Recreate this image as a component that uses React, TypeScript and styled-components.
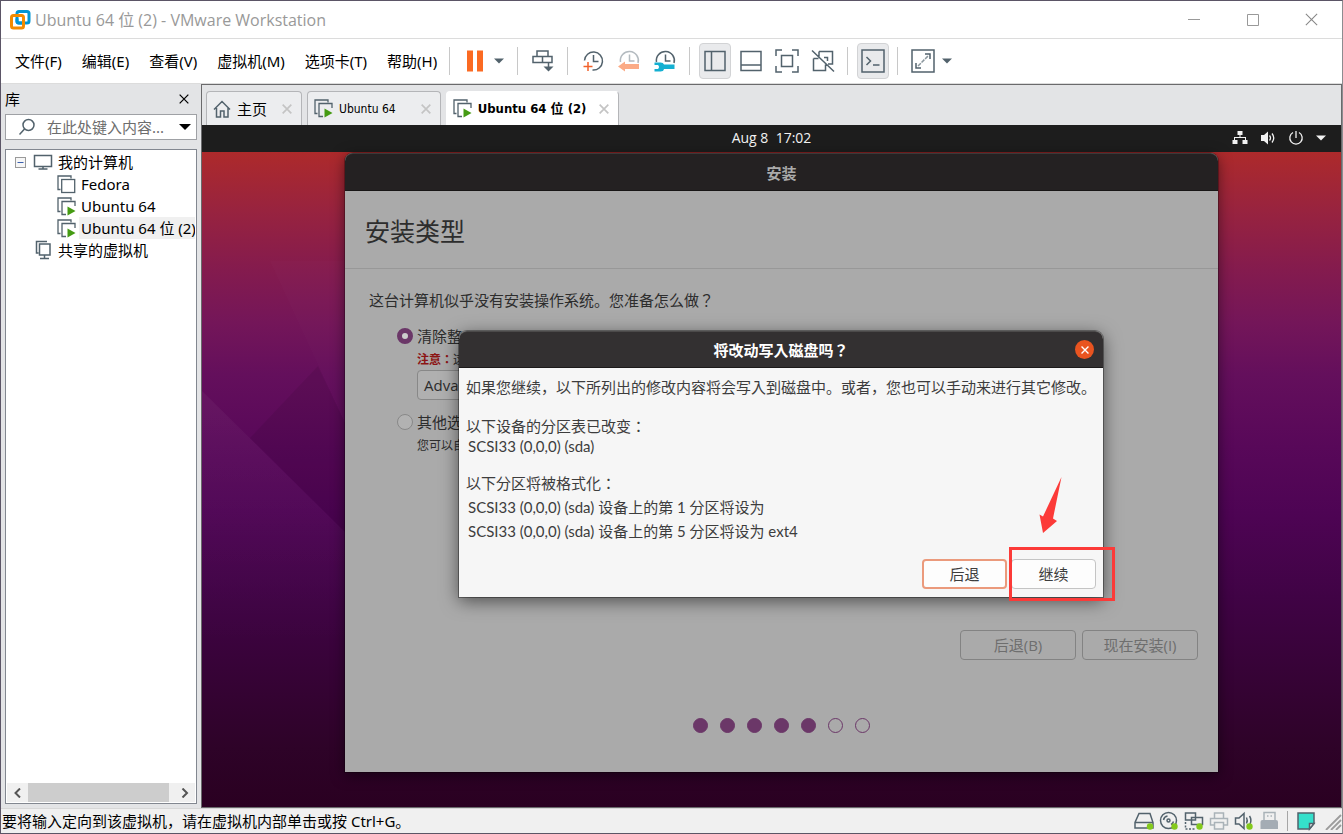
import React from "react";
import styled, { createGlobalStyle, css } from "styled-components";

const hostFont = `"Noto Sans", "Noto Sans CJK SC", sans-serif`;
const titleFont = `"Open Sans", "Noto Sans CJK SC", sans-serif`;
const guestFont = `"Open Sans", "Noto Sans CJK JP", sans-serif`;
const deviceFont = `Lato, "Noto Sans CJK JP", sans-serif`;
const tabFont = `"DejaVu Sans Condensed", "Noto Sans CJK SC", sans-serif`;
const ink = "#52626c";

const GlobalStyle = createGlobalStyle`
  * { box-sizing: border-box; }
  body { margin: 0; background: #5b5566; font-family: ${hostFont}; color: #000; }
  button, input { font: inherit; color: inherit; }
  button { padding: 0; border: 0; background: none; }
  svg { display: block; flex: none; }
`;

/* ---------- window frame ---------- */

const Frame = styled.div`
  display: flex;
  flex-direction: column;
  min-height: 100vh;
  border: 1px solid #5b5566;
  border-right-color: #8c8c90;
  background: #fff;
`;

const TitleBar = styled.header`
  display: flex;
  align-items: center;
  height: 38px;
  padding-right: 1px;
  padding-left: 8px;
  border-bottom: 1px solid #dcdcdc;
`;

const WindowTitle = styled.h1`
  flex: 1;
  margin: 0 0 0 4px;
  font-family: ${titleFont};
  font-size: 16px;
  font-weight: 400;
  line-height: 24px;
  color: #999;
  white-space: nowrap;
`;

const CaptionButton = styled.button`
  display: grid;
  place-items: center;
  width: 59px;
  height: 37px;
`;

const Toolbar = styled.div`
  display: flex;
  align-items: center;
  height: 45px;
  padding-left: 14px;
  border-bottom: 1px solid #dcdcdc;
`;

const Menu = styled.nav`
  display: flex;
  gap: 20px;
  margin-right: 6px;
`;

const MenuItem = styled.button`
  font-size: 15px;
  line-height: 24px;
  white-space: nowrap;
`;

const Separator = styled.span`
  width: 1px;
  height: 28px;
  margin: 0 7px 0 6px;
  background: #c8c8c8;
`;

const ToolButton = styled.button<{ $on?: boolean }>`
  display: grid;
  place-items: center;
  width: 32px;
  height: 36px;
  margin: 0 2px;
  border: 1px solid transparent;
  border-radius: 4px;
  ${(p) => p.$on && css`
    border-color: #d2d3d5;
    background: #e9eaec;
  `}
`;

const CaretButton = styled.button`
  display: grid;
  place-items: center;
  width: 12px;
  height: 36px;
  margin-right: 6px;
`;

const Body = styled.div`
  display: flex;
  flex: 1;
  background: #e3e4e6;
`;

/* ---------- library ---------- */

const Library = styled.aside`
  display: flex;
  flex-direction: column;
  flex: none;
  width: 200px;
  padding: 0 4px 4px;
`;

const LibraryHead = styled.div`
  display: flex;
  align-items: center;
  justify-content: space-between;
  height: 30px;
  padding-right: 7px;
`;

const LibraryTitle = styled.h2`
  margin: 0;
  font-size: 15px;
  font-weight: 400;
  line-height: 24px;
`;

const SearchBox = styled.div`
  display: flex;
  align-items: center;
  height: 26px;
  padding: 0 5px 0 12px;
  border: 1px solid #9fa1a5;
  background: #fff;
`;

const SearchInput = styled.input`
  flex: 1;
  min-width: 0;
  margin-left: 11px;
  padding: 0;
  border: 0;
  outline: 0;
  font-size: 15px;
  line-height: 24px;
  background: none;
  &::placeholder { color: #6d6d6d; opacity: 1; }
`;

const Tree = styled.div`
  display: flex;
  flex-direction: column;
  flex: 1;
  margin-top: 9px;
  padding: 1px;
  border: 1px solid #828790;
  background: #fff;
`;

const TreeList = styled.ul`
  flex: 1;
  margin: 0;
  padding: 0;
  list-style: none;
  overflow: hidden;
`;

const TreeRow = styled.li<{ $indent: number }>`
  display: flex;
  align-items: center;
  height: 22px;
  padding-left: ${(p) => p.$indent}px;
`;

const TreeLabel = styled.span<{ $selected?: boolean }>`
  flex: 1;
  margin-left: 3px;
  padding-left: 2px;
  font-size: 15px;
  line-height: 22px;
  white-space: nowrap;
  overflow: hidden;
  background: ${(p) => (p.$selected ? "#f0f0f0" : "none")};
`;

const Expander = styled.button`
  display: grid;
  place-items: center;
  width: 11px;
  height: 11px;
  margin-right: 7px;
  border: 1px solid #9a9a9a;
  background: #f6f6f6;
`;

const ScrollTrack = styled.div`
  display: flex;
  justify-content: space-between;
  height: 19px;
  background: #f0f0f0;
`;

const ScrollArrow = styled.button`
  display: grid;
  place-items: center;
  width: 21px;
`;

const ScrollThumb = styled.div`
  flex: 1;
  margin-right: 5px;
  background: #cdcdcd;
`;

/* ---------- tabs ---------- */

const Main = styled.main`
  display: flex;
  flex-direction: column;
  flex: 1;
  min-width: 0;
  border: 1px solid #6a6a6c;
`;

const TabStrip = styled.div`
  display: flex;
  gap: 5px;
  padding: 6px 4px 0;
`;

const Tab = styled.div<{ $active?: boolean }>`
  display: flex;
  align-items: center;
  height: 34px;
  padding: 0 8px 0 6px;
  border: 1px solid #b4b5b8;
  border-bottom: 0;
  border-radius: 4px 4px 0 0;
  background: ${(p) => (p.$active ? "#fff" : "#ecedef")};
  border-color: ${(p) => (p.$active ? "#fff #b4b5b8 #fff #fff" : "#b4b5b8")};
`;

const TabLabel = styled.button<{ $active?: boolean; $cjk?: boolean }>`
  margin: 0 ${(p) => (p.$active ? 12 : p.$cjk ? 14 : 24)}px 0 6px;
  font-family: ${(p) => (p.$cjk ? hostFont : tabFont)};
  font-size: ${(p) => (p.$cjk ? 15 : p.$active ? 13 : 12)}px;
  font-weight: ${(p) => (p.$active ? 700 : 400)};
  line-height: 24px;
  white-space: nowrap;
`;

const TabClose = styled.button`
  display: grid;
  place-items: center;
  width: 12px;
  height: 12px;
`;

/* ---------- guest desktop ---------- */

const GuestBar = styled.div`
  display: grid;
  grid-template-columns: 1fr auto 1fr;
  align-items: center;
  height: 27px;
  padding: 0 15px 2px;
  background: #1d1d1d;
  color: #f2f2f2;
  font-family: ${guestFont};
`;

const Clock = styled.time`
  grid-column: 2;
  font-size: 14px;
  font-weight: 500;
  line-height: 20px;
  white-space: pre;
`;

const Indicators = styled.div`
  display: flex;
  align-items: center;
  justify-content: flex-end;
  gap: 12px;
`;

const Desktop = styled.div`
  position: relative;
  display: flex;
  justify-content: center;
  flex: 1;
  padding: 1px 0 35px 20px;
  background: linear-gradient(
    #ad2a2b 0%, #98233f 9%, #841b4e 18%, #741659 26%, #640f5c 34%,
    #580859 45%, #4e0454 55%, #400345 68%, #370337 79%, #2e0328 91%, #2a0021 100%
  );
  font-family: ${guestFont};
  color: #2d2d2d;
`;

const Facets = styled.svg`
  position: absolute;
  top: 0;
  left: 0;
`;

const Installer = styled.section`
  position: relative;
  display: flex;
  flex-direction: column;
  width: 873px;
  border-radius: 8px 8px 0 0;
  background: #aaa;
  box-shadow: 0 3px 14px rgba(0, 0, 0, 0.5), 0 0 0 1px rgba(0, 0, 0, 0.25);
`;

const InstallerHead = styled.div`
  height: 38px;
  border-top: 1px solid #3b3939;
  border-bottom: 1px solid #181616;
  border-radius: 8px 8px 0 0;
  background: #242122;
  color: #aaa;
  font-size: 15px;
  font-weight: 700;
  line-height: 38px;
  text-align: center;
`;

const InstallerTitle = styled.h2`
  margin: 0;
  padding: 23px 20px 20px;
  border-bottom: 1px solid #989898;
  font-size: 25px;
  font-weight: 400;
  line-height: 34px;
`;

const Form = styled.form`
  display: flex;
  flex-direction: column;
  flex: 1;
  padding: 19px 20px 39px 24px;
`;

const Question = styled.p`
  margin: 0 0 12px;
  font-size: 15px;
  line-height: 24px;
`;

const Options = styled.div`
  padding-left: 28px;
`;

const Option = styled.label`
  display: flex;
  align-items: center;
  gap: 4px;
  font-size: 15px;
  line-height: 24px;
`;

const Radio = styled.input`
  appearance: none;
  width: 16px;
  height: 16px;
  margin: 0;
  border: 1px solid #888;
  border-radius: 50%;
  background: #b2b2b2;
  &:checked {
    border: 5px solid #6b3768;
    background: #ccc;
  }
`;

const Note = styled.p`
  margin: 0;
  padding: 2px 0 0 20px;
  font-size: 12px;
  line-height: 20px;
`;

const Warn = styled.strong`
  color: #8c1414;
`;

const Combo = styled.button`
  display: block;
  width: 320px;
  height: 30px;
  margin: 0 0 10px 20px;
  padding-left: 6px;
  border: 1px solid #888;
  border-radius: 4px;
  background: #b0b0b0;
  font-size: 15px;
  line-height: 26px;
  text-align: left;
`;

const FormActions = styled.div`
  display: flex;
  justify-content: flex-end;
  gap: 6px;
  margin-top: auto;
`;

const FormButton = styled.button`
  width: 116px;
  height: 30px;
  border: 1px solid #838383;
  border-radius: 4px;
  color: #6e6e6e;
  font-size: 15px;
  line-height: 28px;
`;

const Steps = styled.div`
  display: flex;
  justify-content: center;
  gap: 12px;
  margin: 58px 4px 0 0;
`;

const Step = styled.span<{ $done: boolean }>`
  width: 15px;
  height: 15px;
  border: 1px solid #6b3768;
  border-radius: 50%;
  background: ${(p) => (p.$done ? "#6b3768" : "none")};
`;

/* ---------- confirmation dialog ---------- */

const Overlay = styled.div`
  position: absolute;
  inset: 0;
  display: grid;
  place-items: center;
  padding: 3px 1px 0 0;
`;

const Dialog = styled.div`
  width: 644px;
  border-radius: 8px 8px 0 0;
  background: #f6f6f6;
  box-shadow: 0 4px 18px rgba(0, 0, 0, 0.55), 0 0 0 1px rgba(0, 0, 0, 0.35);
`;

const DialogHead = styled.div`
  display: grid;
  grid-template-columns: 1fr auto 1fr;
  align-items: center;
  height: 37px;
  padding: 0 9px;
  border-top: 1px solid #4c4a4a;
  border-bottom: 1px solid #1c1a1a;
  border-radius: 8px 8px 0 0;
  background: #333031;
`;

const DialogTitle = styled.h3`
  grid-column: 2;
  margin: 0;
  color: #fff;
  font-size: 15px;
  font-weight: 700;
  line-height: 24px;
`;

const DialogClose = styled.button`
  display: grid;
  place-items: center;
  justify-self: end;
  width: 19px;
  height: 19px;
  border-radius: 50%;
  background: #e95420;
`;

const DialogBody = styled.div`
  padding: 7px 7px 8px;
  color: #3d3d3d;
  font-size: 15px;
  line-height: 24px;
`;

const Line = styled.p`
  margin: 0;
  white-space: nowrap;
`;

const Group = styled.div<{ $tight?: boolean }>`
  margin-top: ${(p) => (p.$tight ? 17 : 15)}px;
  line-height: ${(p) => (p.$tight ? 20 : 24)}px;
`;

const Device = styled(Line)`
  padding-left: 2px;
  font-family: ${deviceFont};
`;

const DialogActions = styled.div`
  display: flex;
  justify-content: flex-end;
  gap: 4px;
  margin-top: 16px;
`;

const Marked = styled.div`
  position: relative;
`;

const DialogButton = styled.button<{ $focus?: boolean }>`
  display: block;
  width: 85px;
  height: 30px;
  border: ${(p) => (p.$focus ? "2px solid #eb9a7c" : "1px solid #c4c4c4")};
  border-radius: 4px;
  background: #fdfdfd;
  font-size: 15px;
  line-height: 26px;
`;

const Highlight = styled.div`
  position: absolute;
  top: -12px;
  left: -2px;
  width: 106px;
  height: 54px;
  border: 3px solid #fc3a38;
  pointer-events: none;
`;

const Arrow = styled.svg`
  position: absolute;
  top: -83px;
  left: 27px;
`;

/* ---------- status bar ---------- */

const StatusBar = styled.footer`
  display: flex;
  align-items: center;
  justify-content: space-between;
  height: 25px;
  padding-left: 1px;
  border-top: 1px solid #d7d7d7;
  background: #f0f0f0;
`;

const StatusText = styled.span`
  font-size: 15px;
  line-height: 24px;
  white-space: nowrap;
`;

const StatusIcons = styled.div`
  display: flex;
  align-items: center;
  gap: 5px;
`;

const StatusButton = styled.button`
  display: grid;
  place-items: center;
  width: 20px;
  height: 20px;
`;

const StatusRule = styled.span`
  width: 1px;
  height: 20px;
  margin: 0 3px;
  background: #a6a6a6;
`;

const Grip = styled.span`
  margin-left: 3px;
`;

/* ---------- icons ---------- */

const Icon = ({ size = 24, children, stroke = ink, width = 1.5 }: {
  size?: number; children: React.ReactNode; stroke?: string; width?: number;
}) => (
  <svg width={size} height={size} viewBox={`0 0 ${size} ${size}`} fill="none" stroke={stroke} strokeWidth={width} aria-hidden="true">
    {children}
  </svg>
);

const Logo = () => (
  <svg width="22" height="22" viewBox="0 0 22 22" fill="none" strokeWidth="3" aria-hidden="true">
    <rect x="8" y="2.5" width="12" height="11.5" rx="2" stroke="#0095d3" />
    <rect x="2.5" y="6.500" width="12" height="12.500" rx="2" stroke="#f38b00" />
    <path d="M8 9.500V12.500a1.500 1.500 0 0 0 1.500 1.500H13" stroke="#0095d3" />
  </svg>
);

const Caret = () => (
  <svg width="10" height="6" viewBox="0 0 10 6" aria-hidden="true">
    <path d="M0 .5h10L5 5.500z" fill={ink} />
  </svg>
);

const Cross = ({ size, color, width = 1.2 }: { size: number; color: string; width?: number }) => (
  <svg width={size} height={size} viewBox="0 0 12 12" stroke={color} strokeWidth={width} aria-hidden="true">
    <path d="M.8.8l10.400 10.400M11.200.8L.8 11.200" />
  </svg>
);

const Screens = ({ running }: { running?: boolean }) => (
  <svg width="19" height="19" viewBox="0 0 19 19" fill="none" stroke={ink} strokeWidth="1.300" aria-hidden="true">
    <path d="M3.500 14.500H1V1h13v2.500" />
    {running ? <path d="M9 17.500H5V4.500h13V9" /> : <rect x="4.700" y="4.500" width="13" height="13" />}
    {running && <path d="M10.500 9.500v9l8-4.500z" fill="#459b13" stroke="none" />}
  </svg>
);

const Dot = ({ x = 15.5, y = 15.5 }: { x?: number; y?: number }) => (
  <circle cx={x} cy={y} r="3.200" fill="#84c91c" stroke="none" />
);

const ClockFace = () => <path d="M3.500 13a9 9 0 1 1 17.500 1" />;

const App = () => (
  <>
    <GlobalStyle />
    <Frame>
      <TitleBar>
        <Logo />
        <WindowTitle>Ubuntu 64 位 (2) - VMware Workstation</WindowTitle>
        <CaptionButton aria-label="Minimize">
          <Icon size={12} stroke="#999" width={1}><path d="M0 5.500h12" /></Icon>
        </CaptionButton>
        <CaptionButton aria-label="Maximize">
          <Icon size={12} stroke="#999" width={1}><path d="M.5.5h11v11H.5z" /></Icon>
        </CaptionButton>
        <CaptionButton aria-label="Close">
          <Cross size={13} color="#888" width={1} />
        </CaptionButton>
      </TitleBar>

      <Toolbar>
        <Menu>
          {["文件(F)", "编辑(E)", "查看(V)", "虚拟机(M)", "选项卡(T)", "帮助(H)"].map((m) => (
            <MenuItem key={m}>{m}</MenuItem>
          ))}
        </Menu>
        <Separator />
        <ToolButton aria-label="Pause">
          <Icon><path d="M4 1.500h6v21H4zM14 1.500h6v21h-6z" fill="#fb6a22" stroke="none" /></Icon>
        </ToolButton>
        <CaretButton aria-label="Power options"><Caret /></CaretButton>
        <Separator />
        <ToolButton aria-label="Send Ctrl+Alt+Del">
          <Icon>
            <path d="M6 2h11v5.500H6zM2 7.500h9.500v6H2zM11.500 7.500H21v6h-9.500zM17.500 14v6" />
            <path d="M12.500 17.500h10l-5 5z" fill={ink} stroke="none" />
          </Icon>
        </ToolButton>
        <Separator />
        <ToolButton aria-label="Take snapshot">
          <Icon>
            <path d="M3.500 11.500a9 9 0 1 1 8 9.500M12.500 6v6.500h5" />
            <path d="M7 13v9M2.500 17.500h9" stroke="#f2622b" />
          </Icon>
        </ToolButton>
        <ToolButton aria-label="Revert snapshot">
          <Icon stroke="#b4bbc0">
            <ClockFace />
            <path d="M12.500 5.500V12h5" />
            <path d="M1 17.500l7-5v2.500h14v5H8v2.500z" fill="#fbab86" stroke="none" />
          </Icon>
        </ToolButton>
        <ToolButton aria-label="Manage snapshots">
          <Icon>
            <ClockFace />
            <path d="M12.500 5.500V12h5" />
            <path d="M1.500 13.500h6q3 0 3.500 2h10.500v4.500H11q-.5 2.500-3.500 2.500h-6v-2.500H5q2-2 0-4H1.500z" fill="#14b0d2" stroke="none" />
          </Icon>
        </ToolButton>
        <Separator />
        <ToolButton $on aria-label="Show library">
          <Icon><path d="M2 2.500h20v19H2zM8.500 2.500v19" /></Icon>
        </ToolButton>
        <ToolButton aria-label="Show thumbnails">
          <Icon><path d="M2 2.500h20v19H2zM2 16h20" /></Icon>
        </ToolButton>
        <ToolButton aria-label="Full screen">
          <Icon>
            <path d="M1 7V1h6M17 1h6v6M23 17v6h-6M7 23H1v-6M6.500 6.500h11v11h-11z" />
          </Icon>
        </ToolButton>
        <ToolButton aria-label="Unity">
          <Icon>
            <path d="M8 2.500h13.500V15H17M2.500 9.500v12h12v-6M8 2.500v5M2.500 9.500h5M13 8.500h3.500V12M1 1.500l22 21" />
          </Icon>
        </ToolButton>
        <Separator />
        <ToolButton $on aria-label="Console view">
          <Icon><path d="M1 1h22v22H1z" /><path d="M5.500 8l4 4-4 4M12 16h6.500" /></Icon>
        </ToolButton>
        <Separator />
        <ToolButton aria-label="Stretch guest">
          <Icon>
            <path d="M1 1h22v22H1z" />
            <path d="M14 5h5v5M10 19H5v-5" />
            <path d="M7 17L17.500 6.500" stroke="#8a969d" strokeDasharray="4 1" />
          </Icon>
        </ToolButton>
        <CaretButton aria-label="Stretch options"><Caret /></CaretButton>
      </Toolbar>

      <Body>
        <Library>
          <LibraryHead>
            <LibraryTitle>库</LibraryTitle>
            <TabClose aria-label="Close library"><Cross size={10} color="#000" width={1.5} /></TabClose>
          </LibraryHead>
          <SearchBox>
            <Icon size={18}><circle cx="10.500" cy="7" r="5.500" /><path d="M6.500 11L1.500 16.500" /></Icon>
            <SearchInput aria-label="Search" placeholder="在此处键入内容..." />
            <svg width="12" height="6" viewBox="0 0 12 6" aria-hidden="true"><path d="M0 0h12L6 6z" /></svg>
          </SearchBox>
          <Tree>
            <TreeList>
              <TreeRow $indent={8}>
                <Expander aria-label="Collapse"><Icon size={9} stroke="#3a5fae" width={1}><path d="M1.500 4.500h6" /></Icon></Expander>
                <Icon size={20}><path d="M1.500 3.500h17v11h-17zM10 14.500V17M5.500 17h9" /></Icon>
                <TreeLabel>我的计算机</TreeLabel>
              </TreeRow>
              <TreeRow $indent={50}><Screens /><TreeLabel>Fedora</TreeLabel></TreeRow>
              <TreeRow $indent={50}><Screens running /><TreeLabel>Ubuntu 64</TreeLabel></TreeRow>
              <TreeRow $indent={50}><Screens running /><TreeLabel $selected>Ubuntu 64 位 (2)</TreeLabel></TreeRow>
              <TreeRow $indent={26}>
                <Icon size={20}><path d="M5.500 13H3.500V1.500H14M6.500 4H17v11H6.500zM11.500 15v3.500M7 18.500h9" /></Icon>
                <TreeLabel>共享的虚拟机</TreeLabel>
              </TreeRow>
            </TreeList>
            <ScrollTrack>
              <ScrollArrow aria-label="Scroll left">
                <Icon size={10} stroke="#555" width={2}><path d="M7 .5L2.500 5 7 9.500" /></Icon>
              </ScrollArrow>
              <ScrollThumb />
              <ScrollArrow aria-label="Scroll right">
                <Icon size={10} stroke="#555" width={2}><path d="M2.500 .5L7 5 2.500 9.500" /></Icon>
              </ScrollArrow>
            </ScrollTrack>
          </Tree>
        </Library>

        <Main>
          <TabStrip>
            <Tab>
              <Icon size={18}><path d="M1 9.500L9 1.500l8 8M3.500 8v9h4v-6h3.500v6h4V8" /></Icon>
              <TabLabel $cjk>主页</TabLabel>
              <TabClose aria-label="Close tab"><Cross size={10} color="#c4c4c4" width={2} /></TabClose>
            </Tab>
            <Tab>
              <Screens running />
              <TabLabel>Ubuntu 64</TabLabel>
              <TabClose aria-label="Close tab"><Cross size={10} color="#c4c4c4" width={2} /></TabClose>
            </Tab>
            <Tab $active>
              <Screens running />
              <TabLabel $active>Ubuntu 64 位 (2)</TabLabel>
              <TabClose aria-label="Close tab"><Cross size={10} color="#c4c4c4" width={2} /></TabClose>
            </Tab>
          </TabStrip>

          <GuestBar>
            <Clock>Aug 8  17:02</Clock>
            <Indicators>
              <svg width="16" height="16" viewBox="0 0 16 16" fill="#f2f2f2" aria-hidden="true">
                <path d="M5.500 1h5v4h-2v2H14v3h1.500v4h-5v-4H13V8H3v2h2.500v4h-5v-4H2V7h5.500V5h-2z" />
              </svg>
              <svg width="16" height="16" viewBox="0 0 16 16" fill="none" stroke="#f2f2f2" aria-hidden="true">
                <path d="M1 5h3l4-3.500v13L4 11H1z" fill="#f2f2f2" stroke="none" />
                <path d="M9.500 5.500q2 2.500 0 5M12 3.500q3.500 4.500 0 9" strokeWidth="1.300" />
              </svg>
              <svg width="16" height="16" viewBox="0 0 16 16" fill="none" stroke="#f2f2f2" strokeWidth="1.300" aria-hidden="true">
                <path d="M5 2.500a6.200 6.200 0 1 0 6 0M8 1v7" />
              </svg>
              <svg width="10" height="6" viewBox="0 0 10 6" fill="#f2f2f2" aria-hidden="true"><path d="M0 .5h10L5 5.500z" /></svg>
            </Indicators>
          </GuestBar>

          <Desktop>
            <Facets width="143" height="500" viewBox="0 0 143 500" aria-hidden="true">
              <defs>
                <linearGradient id="fade" x1="0" y1="0" x2="0" y2="1">
                  <stop offset="0" stopColor="#fff" stopOpacity="0.04" />
                  <stop offset="1" stopColor="#fff" stopOpacity="0" />
                </linearGradient>
              </defs>
              <path d="M68 109L143 271V109z" fill="#fff" opacity="0.012" />
              <path d="M0 239L143 380V500H0z" fill="url(#fade)" />
              <path d="M48 286L116 214 143 271V380z" fill="#000" opacity="0.07" />
            </Facets>
            <Installer>
              <InstallerHead>安装</InstallerHead>
              <InstallerTitle>安装类型</InstallerTitle>
              <Form onSubmit={(e) => e.preventDefault()}>
                <Question>这台计算机似乎没有安装操作系统。您准备怎么做？</Question>
                <Options>
                  <Option><Radio type="radio" name="kind" defaultChecked />清除整</Option>
                  <Note><Warn>注意：</Warn>这</Note>
                  <Combo type="button">Adva</Combo>
                  <Option><Radio type="radio" name="kind" />其他选</Option>
                  <Note>您可以自</Note>
                </Options>
                <FormActions>
                  <FormButton type="button">后退(B)</FormButton>
                  <FormButton type="button">现在安装(I)</FormButton>
                </FormActions>
                <Steps>
                  {[1, 2, 3, 4, 5, 6, 7].map((n) => <Step key={n} $done={n <= 5} />)}
                </Steps>
              </Form>

              <Overlay>
                <Dialog role="dialog" aria-labelledby="confirm-title">
                  <DialogHead>
                    <DialogTitle id="confirm-title">将改动写入磁盘吗？</DialogTitle>
                    <DialogClose aria-label="Close"><Cross size={8} color="#fff" width={2} /></DialogClose>
                  </DialogHead>
                  <DialogBody>
                    <Line>如果您继续，以下所列出的修改内容将会写入到磁盘中。或者，您也可以手动来进行其它修改。</Line>
                    <Group $tight>
                      <Line>以下设备的分区表已改变：</Line>
                      <Device>SCSI33 (0,0,0) (sda)</Device>
                    </Group>
                    <Group>
                      <Line>以下分区将被格式化：</Line>
                      <Device>SCSI33 (0,0,0) (sda) 设备上的第 1 分区将设为</Device>
                      <Device>SCSI33 (0,0,0) (sda) 设备上的第 5 分区将设为 ext4</Device>
                    </Group>
                    <DialogActions>
                      <DialogButton $focus>后退</DialogButton>
                      <Marked>
                        <DialogButton>继续</DialogButton>
                        <Highlight />
                        <Arrow width="26" height="58" viewBox="0 0 26 58" aria-hidden="true">
                          <path d="M23.500 1L15 42.500l4 2.500L5 57 1.500 38.500 5 40.500z" fill="#fc3a38" />
                        </Arrow>
                      </Marked>
                    </DialogActions>
                  </DialogBody>
                </Dialog>
              </Overlay>
            </Installer>
          </Desktop>
        </Main>
      </Body>

      <StatusBar>
        <StatusText>要将输入定向到该虚拟机，请在虚拟机内部单击或按 Ctrl+G。</StatusText>
        <StatusIcons>
          <StatusButton aria-label="Hard disk">
            <Icon size={20}><path d="M5 2.500h11l3 9v5.500H1v-5.500zM1 11.500h18" /><Dot x={16} /></Icon>
          </StatusButton>
          <StatusButton aria-label="CD/DVD">
            <Icon size={20}>
              <circle cx="9.500" cy="9.500" r="8" /><circle cx="9.500" cy="9.500" r="1.500" />
              <path d="M4.500 9a5 5 0 0 1 4-4M12 13.500a5 5 0 0 0 2.500-3" /><Dot />
            </Icon>
          </StatusButton>
          <StatusButton aria-label="Network adapter">
            <Icon size={20}>
              <path d="M1.500 2h10v7h-10zM7.500 6.500h11v7h-11z" fill="#f0f0f0" />
              <path d="M1.500 11v7H12" strokeDasharray="2 1.500" /><Dot />
            </Icon>
          </StatusButton>
          <StatusButton aria-label="Printer">
            <Icon size={20} stroke="#a9b2b8">
              <path d="M5.500 7V2h9v5M5 14H1.500V7.500h17V14H15M5.500 11.500h9V18h-9z" />
            </Icon>
          </StatusButton>
          <StatusButton aria-label="Sound">
            <Icon size={20}>
              <path d="M1.500 7h3.500l5-4.500v15L5 13H1.500z" /><path d="M12.500 6.500q1.500 3 0 6M15.500 5q2.500 4 .5 8" /><Dot />
            </Icon>
          </StatusButton>
          <StatusButton aria-label="USB">
            <Icon size={20} stroke="#a9b2b8">
              <path d="M5 9V1.500h11V9" /><path d="M8 5h1.500M11.500 5H13" />
              <path d="M1.500 18v-7q0-2 2-2h13.500q2 0 2 2v7z" fill="#a4acb4" stroke="none" />
            </Icon>
          </StatusButton>
          <StatusRule />
          <StatusButton aria-label="Messages">
            <Icon size={20}><path d="M2 2h16v10.500L13.500 18H2z" fill="#35e0cb" /><path d="M18 12.500h-4.500V18z" fill="#f0f0f0" /></Icon>
          </StatusButton>
          <Grip>
            <Icon size={18} stroke="#9c9c9c" width={1.8}>
              <path d="M2 18L17 3M7 18L17 8M12 18l5-5" />
            </Icon>
          </Grip>
        </StatusIcons>
      </StatusBar>
    </Frame>
  </>
);

export default App;
